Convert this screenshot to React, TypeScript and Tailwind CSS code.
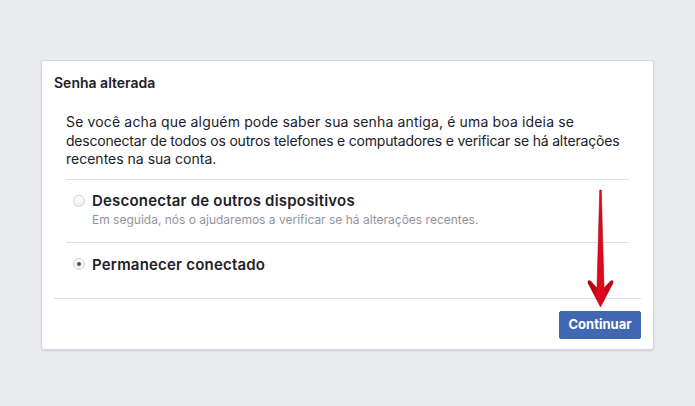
export default function App() {
  return (
    <div
      className="relative w-[695px] h-[406px] bg-[#e9ebee] pt-[60px] pl-[41px]"
      style={{ fontFamily: 'Inter, "Liberation Sans", Arial, sans-serif' }}
    >
      <div className="w-[613px] h-[290px] bg-white border border-[#d3d6db] rounded-[3px] shadow-[0_1px_2px_rgba(0,0,0,0.12)] flex flex-col">
        <div className="px-3 pt-[13px] text-[14px] leading-[18px] font-semibold text-[#1d2129]">
          Senha alterada
        </div>

        <div className="px-6 mt-[21px]">
          <p className="text-[14px] leading-[18.5px] text-[#1d2129] whitespace-nowrap">
            <span className="tracking-[0.15px]">
              Se você acha que alguém pode saber sua senha antiga, é uma boa ideia se
            </span>
            <br />
            <span className="tracking-[-0.2px]">
              desconectar de todos os outros telefones e computadores e verificar se há alterações
            </span>
            <br />
            recentes na sua conta.
          </p>
          <div className="mt-[10px] border-t border-[#dddfe2]" />

          <RadioRow
            checked={false}
            label="Desconectar de outros dispositivos"
            hint="Em seguida, nós o ajudaremos a verificar se há alterações recentes."
          />
          <div className="border-t border-[#dddfe2]" />
          <RadioRow checked label="Permanecer conectado" />
        </div>

        <div className="mx-3 border-t border-[#dddfe2]" />

        <div className="flex justify-end px-3 pt-3">
          <button className="h-[28px] w-[82px] bg-[#4267b2] border border-[#4267b2] rounded-[2px] text-white text-[13px] font-bold">
            Continuar
          </button>
        </div>
      </div>

      {/* seta vermelha por cima */}
      <svg
        className="absolute left-[586px] top-[188px]"
        width="30"
        height="122"
        viewBox="0 0 30 122"
      >
        <defs>
          <linearGradient id="seta" x1="0" x2="1" y1="0" y2="0">
            <stop offset="0" stopColor="#a3000d" />
            <stop offset="0.45" stopColor="#e5081d" />
            <stop offset="1" stopColor="#c00014" />
          </linearGradient>
        </defs>
        <path
          d="M13.7 2 L15.3 2 L18 100 L24.5 93 Q27.5 91.5 27 95 L14.5 119 L2 95 Q1.5 91.5 4.5 93 L11 100 Z"
          fill="url(#seta)"
          stroke="#8a0009"
          strokeWidth="0.5"
          strokeLinejoin="round"
        />
      </svg>
    </div>
  );
}

interface RadioRowProps {
  checked: boolean;
  label: string;
  hint?: string;
}

function RadioRow({ checked, label, hint }: RadioRowProps) {
  return (
    <div className={hint ? "h-[62px] flex items-start pt-[11px] pl-[7px]" : "h-[55px] flex items-center pl-[7px] pb-[12px]"}>
      <span
        className={
          "w-[12px] h-[12px] rounded-full border border-[#cfd2d6] bg-gradient-to-b from-white to-[#eceef0] flex items-center justify-center shrink-0 " +
          (hint ? "mt-[4px]" : "")
        }
      >
        {checked && <span className="w-[4px] h-[4px] rounded-full bg-[#4b4f56]" />}
      </span>
      <div className="ml-[7px]">
        <div className="text-[15px] leading-[19px] font-semibold tracking-[0.2px] text-[#1d2129]">{label}</div>
        {hint && (
          <div className="mt-[2px] text-[12px] leading-[16px] text-[#90949c]">{hint}</div>
        )}
      </div>
    </div>
  );
}
